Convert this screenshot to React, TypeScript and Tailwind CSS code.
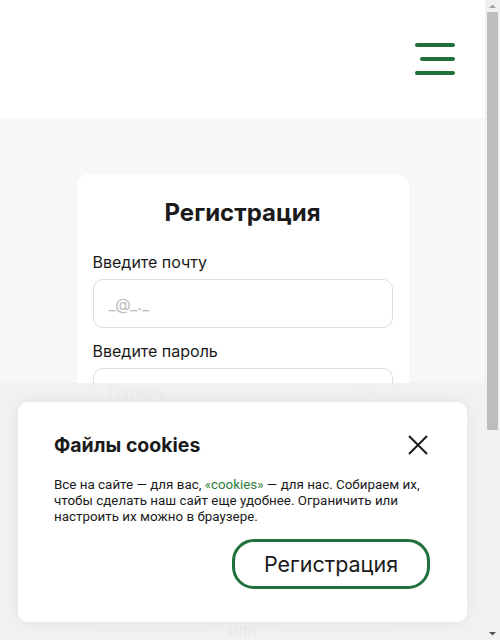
import React from 'react';
import { EyeOff } from 'lucide-react';

const App: React.FC = () => {
  return (
    <div className="flex h-[640px] w-full overflow-hidden font-['Inter',sans-serif] text-[#1a1a1a]">
      <div className="relative flex-1 overflow-hidden bg-[#f7f7f7]">
        {/* Header */}
        <header className="h-[118px] bg-white flex items-center justify-end pr-[30px]">
          <button className="flex flex-col items-end gap-[10px]">
            <span className="block w-[40px] h-[4px] rounded-full bg-[#20703c]" />
            <span className="block w-[35px] h-[4px] rounded-full bg-[#20703c]" />
            <span className="block w-[40px] h-[4px] rounded-full bg-[#20703c]" />
          </button>
        </header>

        {/* Registration card */}
        <main className="pt-[56px] flex justify-center">
          <div className="w-[332px] bg-white rounded-[12px] px-4 pt-[23px] pb-10">
            <h1 className="text-center text-[24px] leading-8 font-bold">Регистрация</h1>

            <label className="block mt-[21px] text-[16px] leading-6">Введите почту</label>
            <div className="mt-[5px] h-[49px] rounded-[10px] border border-[#dddddd] flex items-center px-[15px] text-[16px] text-[#bbbbbb]">
              _@_._
            </div>

            <label className="block mt-[11px] text-[16px] leading-6">Введите пароль</label>
            <div className="mt-[5px] h-[49px] rounded-[10px] border border-[#dddddd] flex items-center justify-between px-[15px] text-[16px] text-[#bbbbbb]">
              <span>Пароль</span>
              <EyeOff size={20} strokeWidth={1.5} className="text-[#cccccc] mr-[6px]" />
            </div>

            <button className="mt-6 w-full h-[50px] rounded-[22px] bg-[#20703c] text-white text-[18px]">
              Зарегистрироваться
            </button>
            <p className="mt-4 text-[12px] leading-4 text-[#888888]">
              Нажимая кнопку, вы соглашаетесь с условиями обработки персональных данных
            </p>

            <div className="mt-[81px] flex items-center gap-5">
              <span className="flex-1 h-[2px] bg-[#dddddd]" />
              <span className="text-[16px] leading-5 text-[#aaaaaa]">или</span>
              <span className="flex-1 h-[2px] bg-[#dddddd]" />
            </div>
            <button className="mt-5 w-full h-[50px] rounded-[22px] border-2 border-[#20703c] text-[18px]">
              Войти
            </button>
          </div>
        </main>

        {/* Cookie banner */}
        <div className="absolute left-0 right-0 bottom-0 h-[257px] bg-[#efefef]/90 px-[18px] pt-[19px]">
          <div className="bg-white rounded-[10px] shadow-[0_0_16px_rgba(0,0,0,0.06)] pl-9 pr-[37px] pt-[30px] pb-[33px] flex flex-col">
            <div className="flex items-center justify-between">
              <h2 className="text-[19.5px] leading-[26px] font-bold">Файлы cookies</h2>
              <svg width="20" height="20" viewBox="0 0 20 20" className="mr-[2px]">
                <path d="M1 1L19 19M19 1L1 19" stroke="#1a1a1a" strokeWidth="2" />
              </svg>
            </div>
            <p className="mt-[19px] font-['Roboto',sans-serif] text-[13.4px] leading-4 text-[#1a1a1a]">
              Все на сайте — для вас, <span className="text-[#2e7d3a]">«cookies»</span> — для нас. Собираем их,
              чтобы сделать наш сайт еще удобнее. Ограничить или настроить их можно в браузере.
            </p>
            <button className="mt-[14px] self-end w-[198px] h-[50px] rounded-[22px] border-[3px] border-[#20703c] text-[21.5px] text-[#1a1a1a]">
              Регистрация
            </button>
          </div>
        </div>
      </div>

      {/* Scrollbar */}
      <div className="w-[15px] bg-[#f1f1f1] flex flex-col items-center">
        <svg width="9" height="12" viewBox="0 0 9 12" className="shrink-0">
          <path d="M1 8L4.5 4.5L8 8Z" fill="#a3a3a3" />
        </svg>
        <div className="w-[11px] h-[418px] bg-[#bdbdbd]" />
        <div className="flex-1" />
        <svg width="9" height="12" viewBox="0 0 9 12" className="shrink-0">
          <path d="M1 4L4.5 7.5L8 4Z" fill="#505050" />
        </svg>
      </div>
    </div>
  );
};

export default App;
